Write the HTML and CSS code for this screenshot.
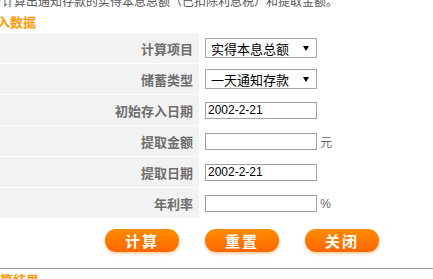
FILE: index.html
```html
<!DOCTYPE html>
<html lang="zh-CN">
<head>
  <meta charset="UTF-8" />
  <title>通知存款计算器</title>
  <link rel="stylesheet" href="styles.css">
</head>
<body>

  <p class="intro">可计算出通知存款的实得本息总额（已扣除利息税）和提取金额。</p>

  <h3 class="section-title">输入数据</h3>

  <table class="form-table">
    <tr>
      <td class="label">计算项目</td>
      <td class="field">
        <span class="select-wrap">
          <select>
            <option>实得本息总额</option>
            <option>提取金额</option>
          </select>
        </span>
      </td>
    </tr>
    <tr>
      <td class="label">储蓄类型</td>
      <td class="field">
        <span class="select-wrap">
          <select>
            <option>一天通知存款</option>
            <option>七天通知存款</option>
          </select>
        </span>
      </td>
    </tr>
    <tr>
      <td class="label">初始存入日期</td>
      <td class="field"><input type="text" value="2002-2-21" /></td>
    </tr>
    <tr>
      <td class="label">提取金额</td>
      <td class="field"><input type="text" /> <span class="unit">元</span></td>
    </tr>
    <tr>
      <td class="label">提取日期</td>
      <td class="field"><input type="text" value="2002-2-21" /></td>
    </tr>
    <tr>
      <td class="label">年利率</td>
      <td class="field"><input type="text" /> <span class="unit">%</span></td>
    </tr>
  </table>

  <div class="buttons">
    <button class="btn">计算</button>
    <button class="btn">重置</button>
    <button class="btn">关闭</button>
  </div>

  <h3 class="section-title result-title">计算结果</h3>

</body>
</html>
```

FILE: styles.css
```css
body {
  margin: 0;
  font-family: "Liberation Sans", "Noto Sans CJK SC", sans-serif;
  font-size: 12px;
  color: #555;
  background: #fff;
  overflow: hidden;
}

.intro {
  margin: -6px 0 0 -10px;
  line-height: 16px;
  font-size: 12px;
  color: #555;
  white-space: nowrap;
}

.section-title {
  margin: 6px 0 3px -16px;
  font-size: 13px;
  line-height: 14px;
  color: #ff9900;
  font-weight: bold;
}

.form-table {
  border-collapse: collapse;
  width: 100%;
}

.form-table td {
  height: 30px;
  padding: 0;
  border-bottom: 1px solid #fff;
}

.label {
  width: 193px;
  padding-right: 6px !important;
  background: #f2f2f2;
  text-align: right;
  font-weight: bold;
  font-size: 13px;
  color: #6e6e6e;
}

.field {
  padding-left: 6px !important;
  white-space: nowrap;
}

.select-wrap {
  position: relative;
  display: inline-block;
  vertical-align: middle;
}

.select-wrap::after {
  content: "";
  position: absolute;
  right: 8px;
  top: 8px;
  border-left: 3px solid transparent;
  border-right: 3px solid transparent;
  border-top: 5px solid #000;
  pointer-events: none;
}

select {
  -webkit-appearance: none;
  appearance: none;
  width: 112px;
  height: 20px;
  padding: 0 0 0 5px;
  border: 1px solid #a5a5a5;
  border-radius: 0;
  background: #fff;
  font-family: "Noto Sans CJK SC", sans-serif;
  font-size: 13px;
  color: #000;
}

input[type="text"] {
  box-sizing: border-box;
  width: 112px;
  height: 17px;
  padding: 0 2px;
  border: 1px solid #a0a0a0;
  font-family: "Liberation Sans", sans-serif;
  font-size: 12px;
  color: #000;
  vertical-align: middle;
}

.unit {
  color: #666;
  font-size: 12px;
  vertical-align: middle;
}

.buttons {
  display: flex;
  gap: 26px;
  padding-left: 105px;
  margin-top: 10px;
  padding-bottom: 16px;
  border-bottom: 1px solid #999;
}

.btn {
  width: 74px;
  height: 23px;
  padding: 0;
  border: none;
  border-radius: 11px;
  background: linear-gradient(#ff8c00, #ff6600);
  box-shadow: 0 2px 3px rgba(255, 120, 0, 0.35);
  color: #fff;
  font-family: "Noto Sans CJK SC", sans-serif;
  font-size: 15px;
  font-weight: bold;
  letter-spacing: 2px;
  line-height: 23px;
  cursor: pointer;
}

.result-title {
  margin: 4px 0 0 -13px;
  line-height: 16px;
}
```
